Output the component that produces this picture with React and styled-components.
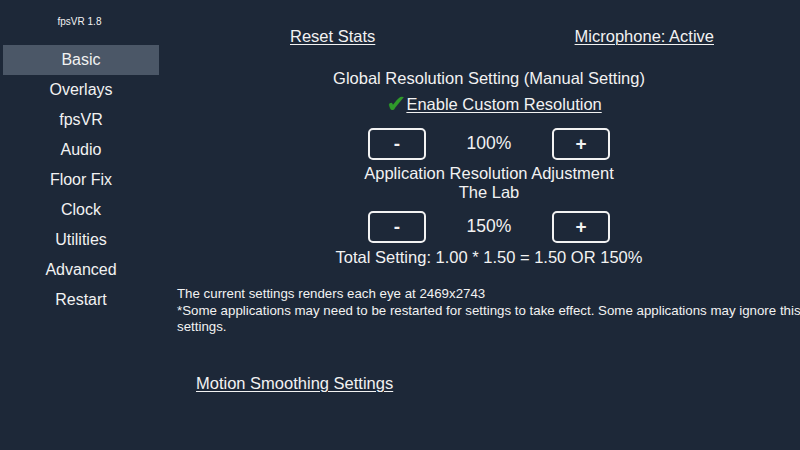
import React from 'react'
import styled, { createGlobalStyle } from 'styled-components'

const GlobalStyle = createGlobalStyle`
    html, body {
        margin: 0;
        padding: 0;
        background: #1d2838;
        overflow: hidden;
    }
    body {
        font-family: "Liberation Sans", Arial, sans-serif;
        color: #f2f2f2;
    }
`

const menu = ['Basic', 'Overlays', 'fpsVR', 'Audio', 'Floor Fix', 'Clock', 'Utilities', 'Advanced', 'Restart']

const Stepper = ({ value }) => (
    <StepRow>
        <StepButton>-</StepButton>
        <Percent>{value}</Percent>
        <StepButton>+</StepButton>
    </StepRow>
)

const App = () => {
    return (
        <Page>
            <GlobalStyle />
            <Sidebar>
                <Version>fpsVR 1.8</Version>
                <Nav>
                    {menu.map((item, index) => (
                        <NavItem key={item} active={index === 0}>{item}</NavItem>
                    ))}
                </Nav>
            </Sidebar>
            <Main>
                <TopRow>
                    <LinkText>Reset Stats</LinkText>
                    <LinkText>Microphone: Active</LinkText>
                </TopRow>
                <Center>
                    <Title>Global Resolution Setting (Manual Setting)</Title>
                    <CheckLine>
                        <Check>✔</Check>
                        <LinkText>Enable Custom Resolution</LinkText>
                    </CheckLine>
                    <Stepper value="100%" />
                    <Label>
                        Application Resolution Adjustment<br />
                        The Lab
                    </Label>
                    <Stepper value="150%" />
                    <Total>Total Setting: 1.00 * 1.50 = 1.50 OR 150%</Total>
                </Center>
                <Note>
                    The current settings renders each eye at 2469x2743<br />
                    *Some applications may need to be restarted for settings to take effect. Some applications may ignore this settings.
                </Note>
                <Smoothing>
                    <LinkText>Motion Smoothing Settings</LinkText>
                </Smoothing>
            </Main>
        </Page>
    )
}

const Page = styled.div`
    display: flex;
    width: 800px;
    height: 450px;
    overflow: hidden;
`

const Sidebar = styled.div`
    width: 162px;
    flex-shrink: 0;
    display: flex;
    flex-direction: column;
`

const Version = styled.div`
    margin-top: 16px;
    height: 12px;
    line-height: 12px;
    font-size: 10px;
    text-align: center;
    padding-right: 3px;
`

const Nav = styled.div`
    margin-top: 17px;
    display: flex;
    flex-direction: column;
`

const NavItem = styled.div`
    margin-left: 3px;
    width: 156px;
    height: 30px;
    display: flex;
    align-items: center;
    justify-content: center;
    font-size: 16px;
    background: ${p => (p.active ? '#4b5767' : 'transparent')};
`

const Main = styled.div`
    flex: 1;
    min-width: 0;
    display: flex;
    flex-direction: column;
    font-size: 16.5px;
`

const TopRow = styled.div`
    margin-top: 26px;
    height: 20px;
    line-height: 20px;
    display: flex;
    justify-content: space-between;
    padding-left: 128px;
    padding-right: 86px;
`

const LinkText = styled.span`
    text-decoration: underline;
    text-decoration-thickness: 1px;
    text-underline-offset: 2px;
    white-space: nowrap;
`

const Center = styled.div`
    display: flex;
    flex-direction: column;
    align-items: center;
    padding-left: 16px;
`

const Title = styled.div`
    margin-top: 22px;
    line-height: 20px;
`

const CheckLine = styled.div`
    margin-top: 6px;
    height: 20px;
    line-height: 20px;
    display: flex;
    align-items: center;
    margin-left: 10px;
`

const Check = styled.span`
    font-family: "DejaVu Sans", sans-serif;
    color: #2f9a2a;
    font-size: 24px;
    margin-right: 0;
`

const StepRow = styled.div`
    margin-top: 14px;
    width: 242px;
    display: grid;
    grid-template-columns: 58px 1fr 58px;
    align-items: center;
    & + div { margin-top: 4px; }
`

const StepButton = styled.div`
    box-sizing: border-box;
    height: 32px;
    border: 2px solid #f2f2f2;
    border-radius: 5px;
    display: flex;
    align-items: center;
    justify-content: center;
    font-size: 19px;
    font-weight: bold;
`

const Percent = styled.div`
    text-align: center;
    font-size: 17.5px;
    padding-bottom: 2px;
`

const Label = styled.div`
    margin-top: 4px;
    line-height: 19px;
    text-align: center;
    & + div { margin-top: 9px; }
`

const Total = styled.div`
    line-height: 20px;
`

const Note = styled.div`
    margin-top: 19px;
    padding-left: 15px;
    width: 650px;
    font-size: 13.3px;
    line-height: 16.5px;
`

const Smoothing = styled.div`
    margin-top: 37px;
    padding-left: 34px;
    line-height: 20px;
`

export default App
